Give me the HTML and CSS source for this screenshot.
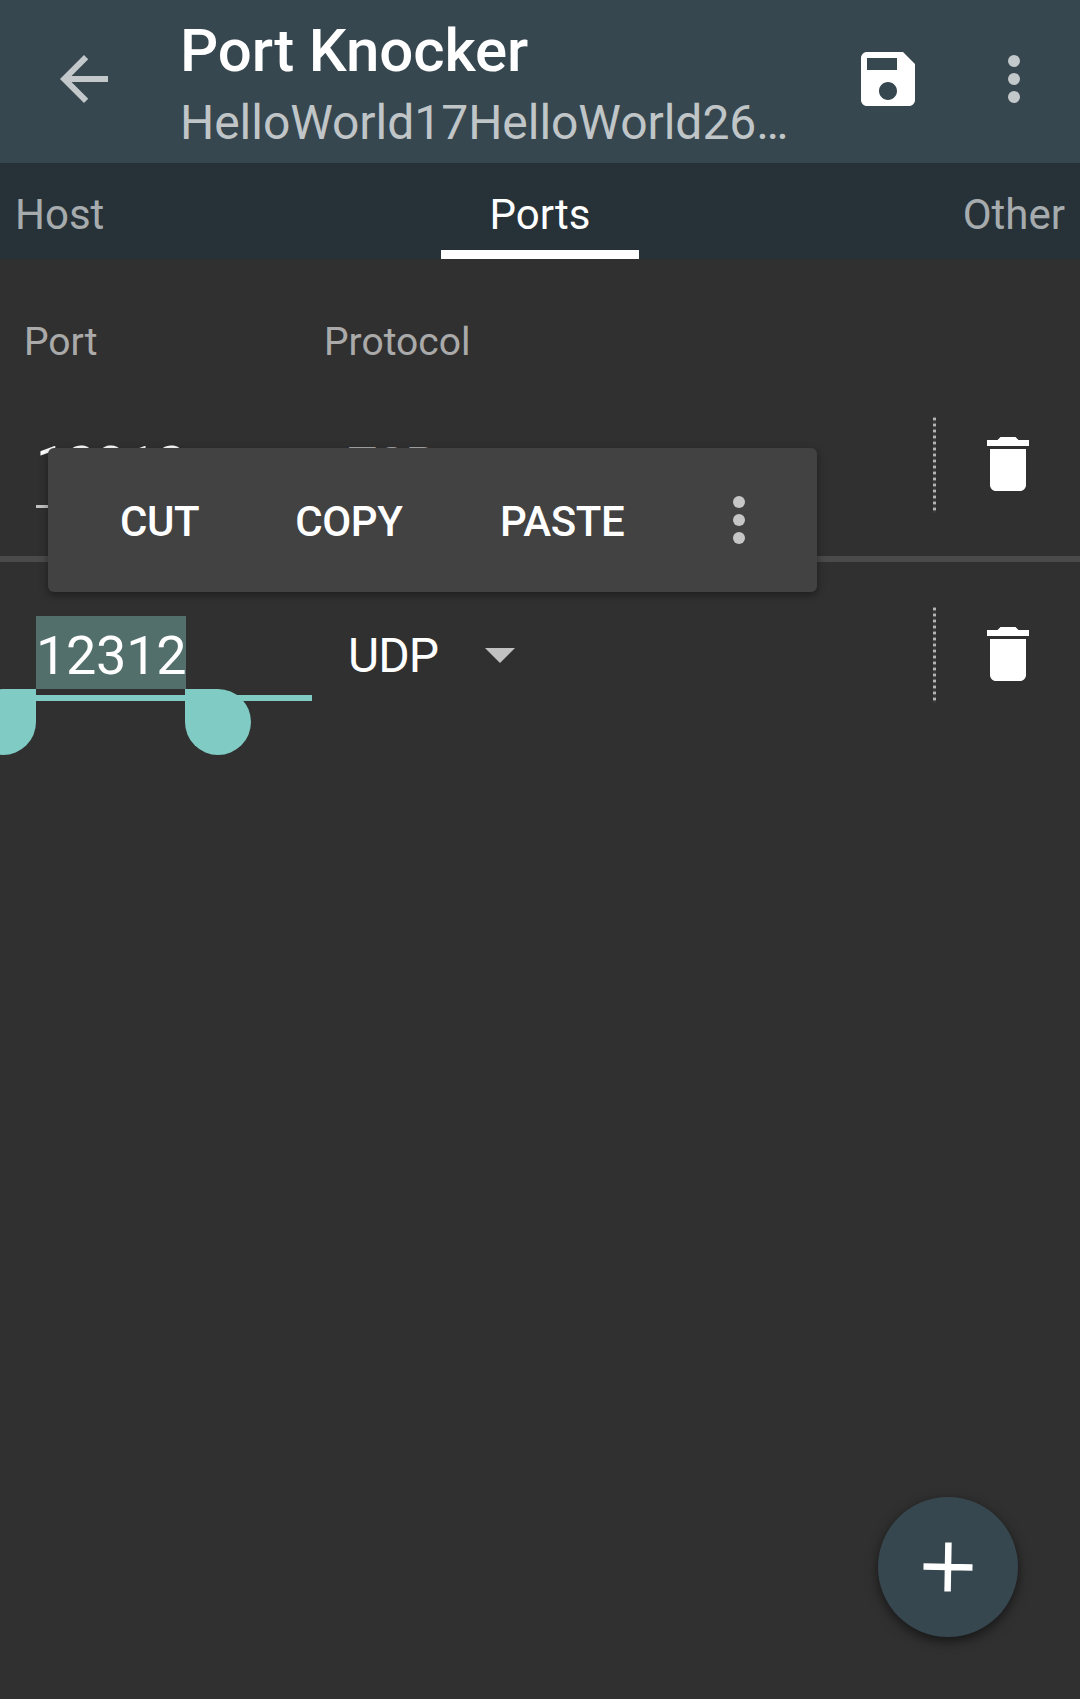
FILE: index.html
```html
<!DOCTYPE html>
<html lang="en">
<head>
<meta charset="utf-8">
<title>Port Knocker</title>
<link rel="stylesheet" href="styles.css">
</head>
<body>
<div class="app">
  <header class="toolbar">
    <svg class="icon muted" viewBox="0 0 24 24"><path d="M20 11H7.83l5.59-5.59L12 4l-8 8 8 8 1.41-1.41L7.83 13H20v-2z"/></svg>
    <div class="titles">
      <h1 class="title">Port Knocker</h1>
      <div class="subtitle">HelloWorld17HelloWorld26…</div>
    </div>
    <svg class="icon" viewBox="0 0 24 24"><path fill-rule="evenodd" d="M17 3H5c-1.1 0-2 .9-2 2v14c0 1.1.9 2 2 2h14c1.1 0 2-.9 2-2V7l-4-4zM12 19c-1.66 0-3-1.34-3-3s1.34-3 3-3 3 1.34 3 3-1.34 3-3 3zM15 9H5V5h10v4z"/></svg>
    <svg class="icon muted more" viewBox="0 0 24 24"><circle cx="12" cy="6" r="2"/><circle cx="12" cy="12" r="2"/><circle cx="12" cy="18" r="2"/></svg>
  </header>
  <nav class="tabs">
    <span class="tab">Host</span>
    <span class="tab active">Ports</span>
    <span class="tab last">Other</span>
  </nav>
  <main>
    <div class="columns"><span class="port-heading">Port</span><span>Protocol</span></div>
    <div class="row">
      <div class="field"><span class="value">12312</span></div>
      <div class="protocol covered">TCP</div>
      <svg class="icon muted" viewBox="0 0 24 24"><path d="M7 10l5 5 5-5z"/></svg>
      <div class="separator"></div>
      <svg class="icon" viewBox="0 0 24 24"><path d="M6 19c0 1.1.9 2 2 2h8c1.1 0 2-.9 2-2V7H6v12zM19 4h-3.5l-1-1h-5l-1 1H5v2h14V4z"/></svg>
    </div>
    <div class="row">
      <div class="field focused">
        <span class="value">12312</span>
        <i class="handle start"></i><i class="handle end"></i>
      </div>
      <div class="protocol">UDP</div>
      <svg class="icon muted" viewBox="0 0 24 24"><path d="M7 10l5 5 5-5z"/></svg>
      <div class="separator"></div>
      <svg class="icon" viewBox="0 0 24 24"><path d="M6 19c0 1.1.9 2 2 2h8c1.1 0 2-.9 2-2V7H6v12zM19 4h-3.5l-1-1h-5l-1 1H5v2h14V4z"/></svg>
    </div>
  </main>
  <div class="popup">
    <span class="action">CUT</span><span class="action">COPY</span><span class="action">PASTE</span>
    <svg class="icon muted" viewBox="0 0 24 24"><circle cx="12" cy="6" r="2"/><circle cx="12" cy="12" r="2"/><circle cx="12" cy="18" r="2"/></svg>
  </div>
  <div class="fab">
    <svg class="plus" viewBox="0 0 50 50"><path d="M25 .5v49M.5 25h49"/></svg>
  </div>
</div>
</body>
</html>
```
FILE: styles.css
```css
* { box-sizing: border-box; }
body {
  margin: 0;
  background: #303030;
  color: #fff;
  font-family: Roboto, "Liberation Sans", sans-serif;
}
.app { position: relative; height: 1699px; overflow: hidden; }
.icon { display: block; flex: none; width: 72px; height: 72px; fill: #fff; }
.muted { fill: #fff; opacity: .7; }

.toolbar {
  display: flex;
  align-items: center;
  height: 163px;
  padding: 0 30px 5px 48px;
  background: #37474f;
}
.titles { flex: none; width: 672px; margin-left: 60px; white-space: nowrap; }
.title { margin: 0; padding-top: 14px; font-size: 60px; font-weight: 500; line-height: 73px; letter-spacing: -.15px; }
.subtitle { font-size: 48px; line-height: 71px; letter-spacing: -.04px; color: rgba(255, 255, 255, .7); }
.more { margin-left: 54px; }

.tabs {
  display: grid;
  grid-template-columns: 441px 198px 441px;
  height: 96px;
  padding-top: 5px;
  background: #263238;
  font-size: 42px;
  line-height: 94px;
}
.tab { padding: 0 15px; color: rgba(255, 255, 255, .6); height: 91px; }
.tab.active { color: #fff; text-align: center; border-bottom: 9px solid #fff; }
.tab.last { text-align: right; }

.columns {
  display: flex;
  height: 113px;
  padding: 49px 24px 0;
  font-size: 39px;
  line-height: 69px;
  color: rgba(255, 255, 255, .6);
}
.port-heading { width: 300px; }
.row {
  display: flex;
  align-items: center;
  height: 190px;
  padding: 0 36px;
  border-bottom: 6px solid #4a4a4a;
}
.row:last-child { border-color: transparent; }
.field {
  position: relative;
  align-self: flex-start;
  width: 276px;
  height: 82px;
  margin-top: 54px;
  border-bottom: 3px solid #c1c1c1;
}
.value {
  display: block;
  width: 150px;
  height: 73px;
  font-size: 54px;
  line-height: 79px;
  letter-spacing: -.3px;
}
.focused { height: 85px; border-bottom: 6px solid #80cbc4; }
.focused .value { background: #526f6c; }
.handle { position: absolute; top: 73px; width: 66px; height: 66px; background: #80cbc4; }
.start { left: -66px; border-radius: 33px 0 33px 33px; }
.end { left: 149px; border-radius: 0 33px 33px 33px; }
.protocol { width: 116px; margin-left: 36px; padding-top: 3px; font-size: 48px; line-height: 56px; letter-spacing: -.9px; }
.covered { padding-top: 1px; color: rgba(255, 255, 255, .6); }
.separator {
  width: 3px;
  height: 96px;
  margin-top: 1px;
  margin-left: auto;
  margin-right: 36px;
  background: repeating-linear-gradient(#686868 0 1px, #b4b4b4 1px 3px, #686868 3px 4px, #383838 4px 6px);
}

.popup {
  position: absolute;
  left: 48px;
  top: 448px;
  display: flex;
  align-items: center;
  width: 769px;
  height: 144px;
  padding-left: 24px;
  border-radius: 6px;
  background: #424242;
  box-shadow: 0 3px 8px rgba(0, 0, 0, .4);
}
.action { padding: 3px 48px 0; font-size: 42px; font-weight: 500; line-height: 50px; letter-spacing: -.4px; }
.action:nth-child(2) { padding-right: 49.5px; }
.popup .icon { margin-left: auto; margin-right: 42px; }

.fab {
  position: absolute;
  left: 878px;
  top: 1497px;
  display: grid;
  place-items: center;
  width: 140px;
  height: 140px;
  border-radius: 50%;
  background: #37474f;
  box-shadow: 0 4px 12px rgba(0, 0, 0, .55);
}
.plus { width: 50px; height: 50px; fill: none; stroke: #fff; stroke-width: 6.5; transform: rotate(1deg); overflow: visible; }
```
